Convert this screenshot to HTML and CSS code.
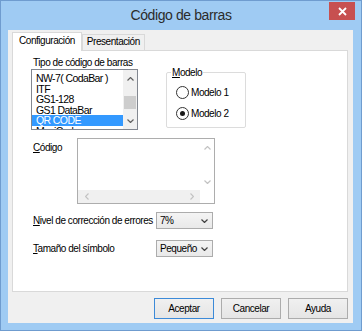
FILE: index.html
```html
<!DOCTYPE html>
<html>
<head>
<meta charset="utf-8">
<title>Código de barras</title>
<link rel="stylesheet" href="styles.css">
</head>
<body>
<div class="window">
	<div class="titlebar">
		<span></span>
		<span class="title">Código de barras</span>
		<span class="close">
			<svg width="9" height="9" viewBox="0 0 9 9"><path d="M1 1 L8 8 M8 1 L1 8" stroke="#fff" stroke-width="1.8"/></svg>
		</span>
	</div>
	<div class="client">
		<div class="tabs">
			<div class="tab active">Configuración</div>
			<div class="tab">Presentación</div>
		</div>
		<div class="panel">
			<div class="top-row">
				<div class="type-col">
					<div class="list-label">Tipo de código de barras</div>
					<div class="listbox">
						<ul class="items">
							<li>NW-7( CodaBar )</li>
							<li>ITF</li>
							<li>GS1-128</li>
							<li>GS1 DataBar</li>
							<li class="selected">QR CODE</li>
							<li>MaxiCode</li>
						</ul>
						<div class="vscroll">
							<span class="arrow"><svg width="7" height="4" viewBox="0 0 7 4"><path d="M0.5 3.5 L3.5 0.5 L6.5 3.5" fill="none" stroke="#606060" stroke-width="1.2"/></svg></span>
							<span class="thumb"></span>
							<span class="arrow"><svg width="7" height="4" viewBox="0 0 7 4"><path d="M0.5 0.5 L3.5 3.5 L6.5 0.5" fill="none" stroke="#606060" stroke-width="1.2"/></svg></span>
						</div>
					</div>
				</div>
				<fieldset class="group">
					<legend><u>M</u>odelo</legend>
					<div class="radio-row"><span class="radio"></span>Modelo 1</div>
					<div class="radio-row"><span class="radio checked"></span>Modelo 2</div>
				</fieldset>
			</div>

			<div class="code-row">
				<label class="code-label"><u>C</u>ódigo</label>
				<div class="textbox">
					<div class="text-area"></div>
					<div class="tb-vscroll">
						<span class="tb-arrow"><svg width="7" height="4" viewBox="0 0 7 4"><path d="M0.5 3.5 L3.5 0.5 L6.5 3.5" fill="none" stroke="#c2c2c2" stroke-width="1.2"/></svg></span>
						<span class="tb-arrow"><svg width="7" height="4" viewBox="0 0 7 4"><path d="M0.5 0.5 L3.5 3.5 L6.5 0.5" fill="none" stroke="#c2c2c2" stroke-width="1.2"/></svg></span>
					</div>
					<div class="tb-hscroll">
						<span class="tb-arrow"><svg width="4" height="7" viewBox="0 0 4 7"><path d="M3.5 0.5 L0.5 3.5 L3.5 6.5" fill="none" stroke="#c2c2c2" stroke-width="1.2"/></svg></span>
						<span class="tb-arrow"><svg width="4" height="7" viewBox="0 0 4 7"><path d="M0.5 0.5 L3.5 3.5 L0.5 6.5" fill="none" stroke="#c2c2c2" stroke-width="1.2"/></svg></span>
					</div>
					<div class="tb-corner"></div>
				</div>
			</div>

			<div class="field-row">
				<label class="field-label"><u>N</u>ivel de corrección de errores</label>
				<div class="combo">
					<span>7%</span>
					<svg width="7" height="4" viewBox="0 0 7 4"><path d="M0.5 0.5 L3.5 3.5 L6.5 0.5" fill="none" stroke="#404040" stroke-width="1.2"/></svg>
				</div>
			</div>
			<div class="field-row second">
				<label class="field-label"><u>T</u>amaño del símbolo</label>
				<div class="combo">
					<span>Pequeño</span>
					<svg width="7" height="4" viewBox="0 0 7 4"><path d="M0.5 0.5 L3.5 3.5 L6.5 0.5" fill="none" stroke="#404040" stroke-width="1.2"/></svg>
				</div>
			</div>
		</div>
		<div class="buttons">
			<button class="btn default">Aceptar</button>
			<button class="btn">Cancelar</button>
			<button class="btn">Ayuda</button>
		</div>
	</div>
</div>
</body>
</html>
```

FILE: styles.css
```css
html, body, ul, li, fieldset, legend, label, button {
	margin: 0;
	padding: 0;
}
body {
	font-family: "Liberation Sans", Arial, sans-serif;
	font-size: 10px;
	letter-spacing: -0.45px;
	color: #000;
	background: #fff;
}
u {
	text-decoration: underline;
	text-underline-offset: 1px;
}
.window {
	width: 362px;
	height: 331px;
	box-sizing: border-box;
	border: 1px solid #6f9ccf;
	background: #9fcbf3;
	display: flex;
	flex-direction: column;
}
.titlebar {
	height: 29px;
	display: grid;
	grid-template-columns: 1fr auto 1fr;
}
.title {
	align-self: center;
	font-size: 14px;
	letter-spacing: -0.4px;
	color: #2b2b2b;
	margin-top: -1px;
}
.close {
	justify-self: end;
	align-self: start;
	width: 26px;
	height: 18px;
	margin-top: 1px;
	margin-right: 6px;
	background: #c75050;
	display: flex;
	align-items: center;
	justify-content: center;
}
.client {
	flex: 1;
	margin: 0 8px 7px 7px;
	padding: 2px 5px 4px 4px;
	background: #f0f0f0;
	display: flex;
	flex-direction: column;
}

/* onglets */
.tabs {
	height: 18px;
	display: flex;
	align-items: flex-end;
}
.tab {
	height: 16px;
	box-sizing: border-box;
	padding: 0 4px;
	line-height: 14px;
	border: 1px solid #d9d9d9;
	border-bottom: none;
	background: #f0f0f0;
}
.tab.active {
	height: 19px;
	margin-bottom: -1px;
	padding: 0 6px;
	line-height: 16px;
	background: #fff;
	position: relative;
	z-index: 1;
}
.panel {
	flex: 1;
	background: #fff;
	border: 1px solid #d9d9d9;
	padding: 5px 0 0 18px;
}

/* liste des types */
.top-row {
	display: flex;
	align-items: flex-start;
}
.list-label {
	margin-left: 2px;
	line-height: 13px;
}
.listbox {
	width: 107px;
	height: 61px;
	box-sizing: border-box;
	border: 1px solid #828790;
	display: flex;
	overflow: hidden;
}
.items {
	flex: 1;
	list-style: none;
	padding-top: 3px;
	font-size: 10.5px;
	letter-spacing: -0.6px;
}
.items li {
	line-height: 10.6px;
	padding-left: 4px;
	white-space: nowrap;
}
.items li.selected {
	background: #3399ff;
	color: #fff;
}
.vscroll {
	width: 14px;
	background: #f0f0f0;
	display: flex;
	flex-direction: column;
	align-items: center;
}
.vscroll .arrow {
	height: 17px;
	display: flex;
	align-items: center;
}
.vscroll .thumb {
	width: 12px;
	height: 13px;
	margin-top: 9px;
	margin-bottom: auto;
	background: #cdcdcd;
}

/* modele */
.group {
	width: 80px;
	height: 62px;
	box-sizing: border-box;
	margin: 10px 0 0 28px;
	padding: 0 0 0 4px;
	border: 1px solid #dcdcdc;
	border-radius: 2px;
}
.group legend {
	padding: 0 1px;
	line-height: 13px;
}
.radio-row {
	height: 13px;
	display: flex;
	align-items: center;
	gap: 2px;
	margin: 7px 0 0 5px;
}
.radio-row + .radio-row {
	margin-top: 8px;
}
.radio {
	width: 13px;
	height: 13px;
	box-sizing: border-box;
	border: 1px solid #333;
	border-radius: 50%;
	background: #fff;
	display: flex;
	align-items: center;
	justify-content: center;
}
.radio.checked::after {
	content: "";
	width: 5px;
	height: 5px;
	border-radius: 50%;
	background: #1a1a1a;
}

/* code */
.code-row {
	display: flex;
	align-items: flex-start;
	margin-top: 8px;
}
.code-label {
	width: 44px;
	margin: 3px 0 0 2px;
	line-height: 13px;
}
.textbox {
	width: 138px;
	height: 66px;
	box-sizing: border-box;
	border: 1px solid #adadad;
	background: #fff;
	display: grid;
	grid-template-columns: 1fr 14px;
	grid-template-rows: 1fr 13px;
}
.tb-vscroll {
	display: flex;
	flex-direction: column;
	justify-content: space-between;
}
.tb-hscroll {
	background: #f0f0f0;
	display: flex;
	justify-content: space-between;
}
.tb-arrow {
	height: 17px;
	width: 17px;
	display: flex;
	align-items: center;
	justify-content: center;
}
.tb-vscroll .tb-arrow {
	width: 14px;
}
.tb-hscroll .tb-arrow {
	height: 13px;
}

/* listes deroulantes */
.field-row {
	display: flex;
	align-items: center;
	margin-top: 8px;
}
.field-row.second {
	margin-top: 11px;
}
.field-label {
	width: 123px;
	margin-left: 2px;
}
.combo {
	width: 57px;
	height: 17px;
	box-sizing: border-box;
	border: 1px solid #acacac;
	background: linear-gradient(#f4f4f4, #e9e9e9);
	display: flex;
	align-items: center;
	justify-content: space-between;
	padding: 0 4px 0 3px;
}

/* boutons */
.buttons {
	margin-top: 6px;
	display: flex;
	justify-content: flex-end;
	gap: 7px;
}
.btn {
	width: 60px;
	height: 21px;
	border: 1px solid #acacac;
	background: linear-gradient(#f0f0f0, #e5e5e5);
	font-family: inherit;
	font-size: 10px;
	letter-spacing: inherit;
	color: #000;
}
.btn.default {
	border-color: #3c8ad8;
}
```
